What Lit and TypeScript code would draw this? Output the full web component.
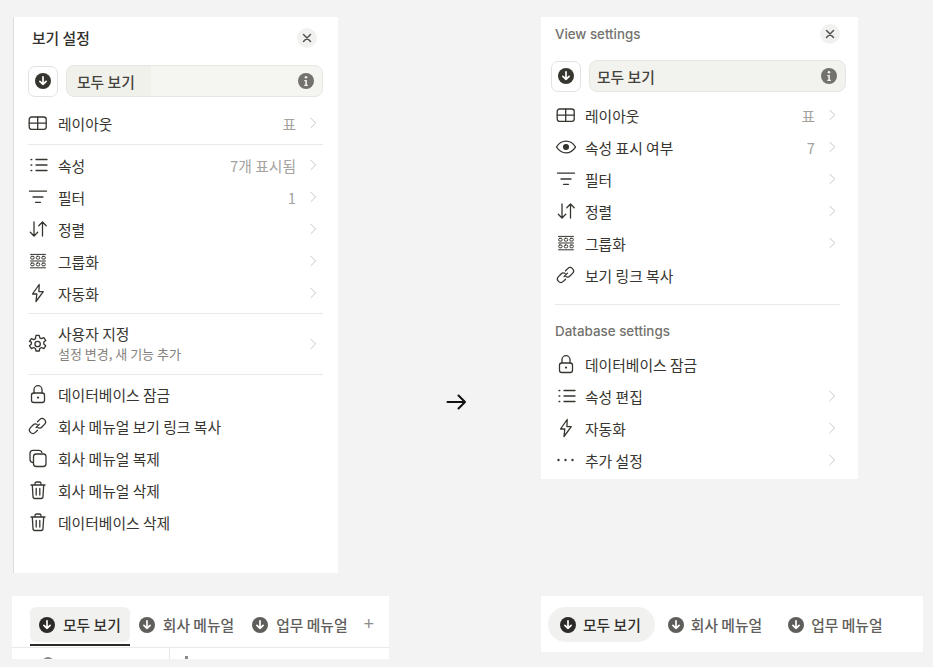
import { LitElement, html, css, svg } from "lit";
import { customElement } from "lit/decorators.js";

const ICONS: Record<string, any> = {
  table: svg`<rect x="3.2" y="5" width="17.000" height="12.400" rx="2.400"/><path d="M3.2 11.200h17M11.700 5v12.400"/>`,
  list: svg`<path d="M10 5.500h11M10 11h11M10 16.500h11"/><path d="M5.200 5.500h.4M5.200 11h.4M5.200 16.500h.4" stroke-width="1.700"/>`,
  filter: svg`<path d="M3.500 5.200h17M7 11h10M9.500 16.300h5"/>`,
  sort: svg`<path d="M8 4v14M4.300 14.300 8 18l3.700-3.700M16.500 18V4M12.800 7.700 16.500 4l3.700 3.700"/>`,
  group: svg`<g stroke-width="1"><path d="M4.500 4.400h15M4.500 11h15M4.500 17.800h15"/><rect x="4.700" y="6.300" width="3.400" height="2.800" rx="1.100"/><rect x="10.300" y="6.300" width="3.400" height="2.800" rx="1.100"/><rect x="15.900" y="6.300" width="3.400" height="2.800" rx="1.100"/><rect x="4.700" y="13" width="3.400" height="2.800" rx="1.100"/><rect x="10.300" y="13" width="3.400" height="2.800" rx="1.100"/><rect x="15.900" y="13" width="3.400" height="2.800" rx="1.100"/></g>`,
  bolt: svg`<path d="M13.200 2.500 6.500 12h4.300l-.8 7.500 7.300-9.800h-4.400z" stroke-linejoin="round"/>`,
  gear: svg`<path d="M10 2.400h3.200l.6 2.500 1.700.8 2.300-1.100 1.900 2.800-1.900 1.700v2l1.900 1.700-1.900 2.800-2.300-1.100-1.700 1-.6 2.500H10l-.6-2.500-1.700-1-2.300 1.100-1.900-2.800 1.900-1.700v-2L3.500 8.400l1.900-2.800 2.300 1.100 1.700-.8z" stroke-linejoin="round"/><circle cx="11.600" cy="11" r="2.700"/>`,
  lock: svg`<path d="M8 10V6.700a4 4 0 0 1 8 0V10"/><rect x="5.500" y="10" width="13" height="9.500" rx="2.200"/><circle cx="12" cy="14.600" r="1.100" fill="currentColor" stroke="none"/>`,
  link: svg`<path d="m10.100 12.500 3.400-3.400"/><path d="M11.500 6.800 13.700 4.600a3.400 3.400 0 0 1 4.800 0 3.400 3.400 0 0 1 0 4.800l-2.600 2.600a3.400 3.400 0 0 1-4.100.5"/><path d="M11.500 15.200 9.300 17.400a3.400 3.400 0 0 1-4.800 0 3.400 3.400 0 0 1 0-4.800L7.100 10a3.400 3.400 0 0 1 4.100-.5"/>`,
  copy: svg`<path d="M6.500 15.500A3 3 0 0 1 4 12.600V6.200A3 3 0 0 1 7 3.300h6.200a3 3 0 0 1 2.800 2.300"/><rect x="7.500" y="7" width="12.500" height="12.500" rx="2.700"/>`,
  trash: svg`<path d="M5 6h14M9 6V4.500A1.500 1.500 0 0 1 10.500 3h3A1.500 1.500 0 0 1 15 4.500V6M6.300 6l.7 11.500a2 2 0 0 0 2 2h6a2 2 0 0 0 2-2L17.700 6M10.200 9.500v6.500M13.800 9.500v6.500"/>`,
  eye: svg`<path d="M2.500 11C5 7 8.300 5.200 12 5.200S19 7 21.500 11C19 15 15.700 16.800 12 16.800S5 15 2.500 11z"/><circle cx="12" cy="11" r="2.400" fill="currentColor"/>`,
  dots: svg`<circle cx="4.500" cy="11" r="1.200" fill="currentColor" stroke="none"/><circle cx="11.500" cy="11" r="1.200" fill="currentColor" stroke="none"/><circle cx="18.500" cy="11" r="1.200" fill="currentColor" stroke="none"/>`,
};

function icon(name: string) {
  return html`<svg class="ic" viewBox="0 0 22 22" fill="none" stroke="currentColor" stroke-width="1.300" stroke-linecap="round">${ICONS[name]}</svg>`;
}

const chevron = html`<svg class="chev" viewBox="0 0 8 14" fill="none" stroke="currentColor" stroke-width="1.100" stroke-linecap="round" stroke-linejoin="round"><path d="M1 1.500 6.500 7 1 12.500"/></svg>`;

function down(cls: string) {
  return html`<svg class=${cls} viewBox="0 0 16 16"><circle cx="8" cy="8" r="8" fill="currentColor"/><path d="M8 3.800v7.500M4.900 8.300 8 11.400l3.100-3.100" fill="none" stroke="#fff" stroke-width="1.700" stroke-linecap="round" stroke-linejoin="round"/></svg>`;
}

const close = html`<span class="close"><svg viewBox="0 0 10 10" fill="none" stroke="currentColor" stroke-width="1.500" stroke-linecap="round"><path d="M1.500 1.500l7 7M8.500 1.500l-7 7"/></svg></span>`;

const info = html`<svg class="info" viewBox="0 0 16 16"><circle cx="8" cy="8" r="8" fill="currentColor"/><circle cx="8" cy="4.300" r="1.300" fill="#f1f1ec"/><path d="M6.300 7h2.600v4.700h1v1.200H6.200v-1.200h1.100V8.200h-1z" fill="#f1f1ec"/></svg>`;

type Row = { i: string; t: string; v?: string; c?: boolean };

function row(r: Row) {
  return html`<div class="row">${icon(r.i)}<span class="label">${r.t}</span>${r.v ? html`<span class="val">${r.v}</span>` : ""}${r.c ? chevron : ""}</div>`;
}

@customElement("app-root")
export class AppRoot extends LitElement {
  static styles = css`
    :host { display: block; width: 933px; height: 667px; background: #f3f3f3; overflow: hidden;
      font-family: "Noto Sans CJK KR", "Noto Sans", sans-serif; color: #37352f; }
    .page { display: grid; grid-template-columns: 389px 152px 392px; height: 667px; box-sizing: border-box; padding-top: 17px; }
    .left { padding-left: 12px; display: flex; flex-direction: column; align-items: flex-start; }
    .right { display: flex; flex-direction: column; align-items: flex-start; }
    .mid { display: flex; justify-content: flex-start; padding: 376px 0 0 57px; }
    .arrow { width: 20px; height: 18px; color: #111; }
    .panel { background: #fff; box-sizing: border-box; }
    .p1 { width: 325px; height: 556px; margin-left: 1px; border-left: 1px solid #dedede; padding: 0 15px 0 14px; }
    .p2 { width: 317px; height: 462px; padding: 0 12px 0 10px; }
    .head { display: flex; align-items: center; justify-content: space-between; }
    .p1 .head { height: 42px; padding: 0 6px 0 4px; font-size: 14.8px; font-weight: 500; color: #32302c; }
    .p1 .head > span:first-child { margin-top: -2px; }
    .p2 .head { height: 33px; padding: 0 6px 0 4px; font-size: 13.300px; font-weight: 500; color: #73726e; font-family: Inter, sans-serif; }
    .close { width: 20px; height: 20px; border-radius: 50%; background: #f1f1ef; display: flex; align-items: center; justify-content: center; color: #55534e; }
    .close svg { width: 10px; height: 10px; }
    .name { display: flex; align-items: center; gap: 8px; }
    .p1 .name { margin-top: 6px; }
    .p2 .name { margin-top: 10px; }
    .ibox { width: 30px; height: 31px; box-sizing: border-box; border: 1px solid #e3e2e0; border-radius: 7px; display: flex; align-items: center; justify-content: center; color: #37352f; background: #fff; }
    .dl { width: 16px; height: 16px; display: block; }
    .input { flex: 1; height: 32px; box-sizing: border-box; border: 1px solid #e6e6e2; border-radius: 8px; background: #f2f2ee; display: flex; align-items: center; justify-content: space-between; padding: 0 8px 0 7px; font-size: 14.8px; color: #44423d; font-weight: 500; }
    .p1 .input { background: linear-gradient(90deg, #f1f1ec 84px, #f5f5f1 84px); padding-left: 10px; }
    .info { width: 16px; height: 16px; color: #73726e; display: block; }
    .rows { display: flex; flex-direction: column; }
    .row { height: 32px; display: flex; align-items: center; font-size: 14.8px; color: #37352f; }
    .ic { width: 22px; height: 22px; flex: none; margin-right: 9px; color: #37352f; }
    .label { flex: 1; white-space: nowrap; }
    .val { color: #a5a39f; font-size: 14.8px; margin-right: 14px; }
    .chev { width: 7px; height: 12px; color: #c4c3c0; flex: none; }
    .sep { height: 1px; background: #e9e9e7; }
    .p1 .row { margin-left: -2px; padding-right: 6px; }
    .p1 .ic { margin-right: 10px; }
    .p2 .row { padding-left: 3px; padding-right: 10px; }
    .two { height: 60px; }
    .twotext { flex: 1; display: flex; flex-direction: column; line-height: 20px; }
    .sub { font-size: 13px; color: #83817c; }
    .section { font-size: 13.400px; font-weight: 500; color: #73726e; font-family: Inter, sans-serif; padding-left: 4px; height: 18px; line-height: 18px; }

    .tabs { box-sizing: border-box; background: #fff; overflow: hidden; }
    .t1 { width: 377px; height: 63px; margin-top: 23px; }
    .t2 { width: 382px; height: 56px; margin-top: 117px; }
    .tabrow { display: flex; align-items: center; }
    .t1 .tabrow { margin-top: 11px; padding-left: 18px; height: 40px; border-bottom: 1px solid #e9e9e7; align-items: flex-start; }
    .tab { display: flex; align-items: center; gap: 8px; font-size: 14.8px; font-weight: 500; color: #5f5e5b; white-space: nowrap; }
    .t1 .tab { height: 35px; padding: 0 9px; }
    .t1 .tab.on { background: #f1f1ef; border-radius: 6px; color: #32302c; position: relative; }
    .t1 .tab.on::after { content: ""; position: absolute; left: 0; right: 0; bottom: -4px; height: 2px; background: #2c2b28; }
    .t1 .plus { font-size: 18px; font-weight: 300; color: #8e8c88; margin-left: 7px; height: 35px; line-height: 35px; font-family: "Liberation Sans", sans-serif; }
    .tab .dl { color: #5f5e5b; }
    .tab.on .dl { color: #2c2b28; }
    .t2 .tabrow { margin-top: 11px; padding-left: 7px; }
    .t2 .tab { height: 35px; padding: 0 13px; gap: 7px; }
    .t2 .tab.on { background: #f1f1ef; border-radius: 18px; color: #32302c; padding: 0 14px 0 12px; }
    .clip { display: flex; height: 12px; font-size: 13px; color: #73726e; }
    .clip .c1 { width: 158px; box-sizing: border-box; padding: 7px 0 0 30px; border-right: 1px solid #e9e9e7; white-space: nowrap; display: flex; gap: 11px; }
    .clip .c2 { padding: 7px 0 0 15px; white-space: nowrap; display: flex; gap: 18px; }
    .dot { width: 12px; height: 12px; border-radius: 50%; background: #8b8a86; margin-top: 2px; flex: none; }
    .bar { width: 3px; height: 12px; background: #8b8a86; margin-top: 1px; flex: none; }
  `;

  render() {
    return html`<div class="page">
      <div class="left">
        <div class="panel p1">
          <div class="head"><span>보기 설정</span>${close}</div>
          <div class="name"><div class="ibox">${down("dl")}</div><div class="input"><span>모두 보기</span>${info}</div></div>
          <div class="rows" style="margin-top:10px">${row({ i: "table", t: "레이아웃", v: "표", c: true })}</div>
          <div class="sep" style="margin-top:5px"></div>
          <div class="rows" style="margin-top:4px">
            ${[
              { i: "list", t: "속성", v: "7개 표시됨", c: true },
              { i: "filter", t: "필터", v: "1", c: true },
              { i: "sort", t: "정렬", c: true },
              { i: "group", t: "그룹화", c: true },
              { i: "bolt", t: "자동화", c: true },
            ].map(row)}
          </div>
          <div class="sep" style="margin-top:4px"></div>
          <div class="row two">${icon("gear")}<div class="twotext"><span>사용자 지정</span><span class="sub">설정 변경, 새 기능 추가</span></div>${chevron}</div>
          <div class="sep"></div>
          <div class="rows" style="margin-top:3px">
            ${[
              { i: "lock", t: "데이터베이스 잠금" },
              { i: "link", t: "회사 메뉴얼 보기 링크 복사" },
              { i: "copy", t: "회사 메뉴얼 복제" },
              { i: "trash", t: "회사 메뉴얼 삭제" },
              { i: "trash", t: "데이터베이스 삭제" },
            ].map(row)}
          </div>
        </div>
        <div class="tabs t1">
          <div class="tabrow">
            <div class="tab on">${down("dl")}모두 보기</div>
            <div class="tab">${down("dl")}회사 메뉴얼</div>
            <div class="tab">${down("dl")}업무 메뉴얼</div>
            <div class="plus">+</div>
          </div>
          <div class="clip"><div class="c1"><span class="dot"></span>파일 유형</div><div class="c2"><span class="bar"></span>담당 인원</div></div>
        </div>
      </div>
      <div class="mid">
        <svg class="arrow" viewBox="0 0 20 18" fill="none" stroke="currentColor" stroke-width="2" stroke-linecap="round" stroke-linejoin="round"><path d="M1.500 9H19M12.500 2.500 19 9l-6.500 6.500"/></svg>
      </div>
      <div class="right">
        <div class="panel p2">
          <div class="head"><span>View settings</span>${close}</div>
          <div class="name"><div class="ibox">${down("dl")}</div><div class="input"><span>모두 보기</span>${info}</div></div>
          <div class="rows" style="margin-top:7px">
            ${[
              { i: "table", t: "레이아웃", v: "표", c: true },
              { i: "eye", t: "속성 표시 여부", v: "7", c: true },
              { i: "filter", t: "필터", c: true },
              { i: "sort", t: "정렬", c: true },
              { i: "group", t: "그룹화", c: true },
              { i: "link", t: "보기 링크 복사" },
            ].map(row)}
          </div>
          <div class="sep" style="margin:13px 6px 0 4px"></div>
          <div class="section" style="margin-top:17px">Database settings</div>
          <div class="rows" style="margin-top:8px">
            ${[
              { i: "lock", t: "데이터베이스 잠금" },
              { i: "list", t: "속성 편집", c: true },
              { i: "bolt", t: "자동화", c: true },
              { i: "dots", t: "추가 설정", c: true },
            ].map(row)}
          </div>
        </div>
        <div class="tabs t2">
          <div class="tabrow">
            <div class="tab on">${down("dl")}모두 보기</div>
            <div class="tab">${down("dl")}회사 메뉴얼</div>
            <div class="tab">${down("dl")}업무 메뉴얼</div>
          </div>
        </div>
      </div>
    </div>`;
  }
}
